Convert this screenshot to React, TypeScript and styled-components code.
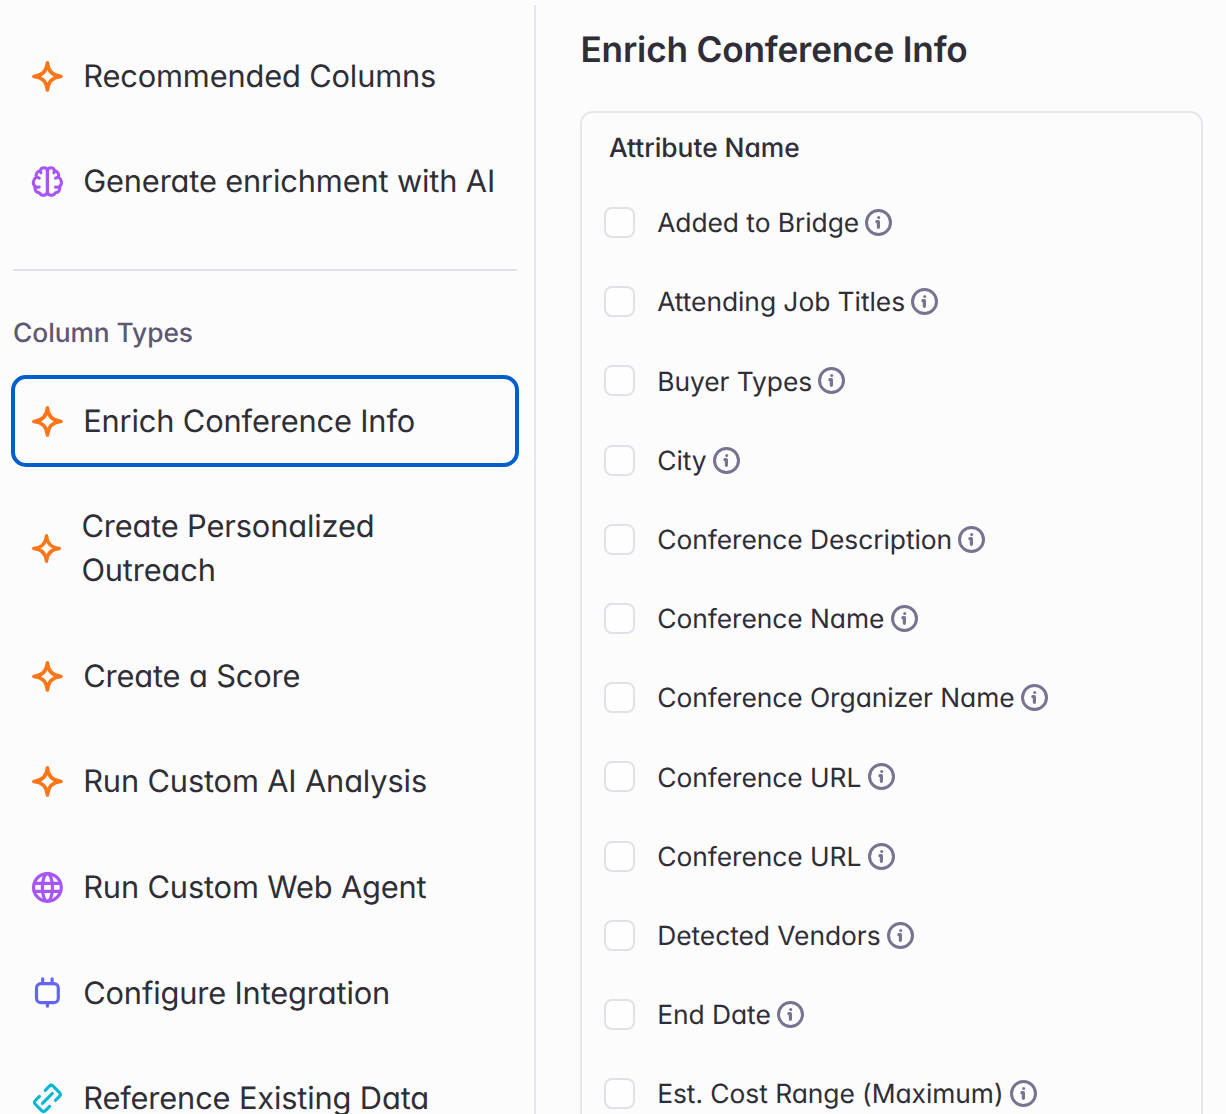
import React, { useState } from 'react';
import styled, { createGlobalStyle } from 'styled-components';

const GlobalStyle = createGlobalStyle`
  * {
    box-sizing: border-box;
  }

  body {
    margin: 0;
    background: #fcfcfc;
    color: #2f2e37;
    font-family: 'Inter', sans-serif;
    font-feature-settings: 'cv11' 1;
    text-rendering: geometricPrecision;
    overflow: hidden;
  }
`;

const Page = styled.div`
  display: flex;
  height: 1114px;
  overflow: hidden;
`;

const Sidebar = styled.aside`
  width: 536px;
  flex-shrink: 0;
  margin-top: 5px;
  padding: 27px 17px 0 13px;
  border-right: 2px solid #e6e5eb;
`;

const NavList = styled.nav`
  display: flex;
  flex-direction: column;
  gap: 17.6px;
`;

const NavItem = styled.button<{ $active?: boolean }>`
  display: flex;
  align-items: center;
  gap: 20.4px;
  width: 100%;
  padding: 22.8px 10px 21.2px 19px;
  border: none;
  border-radius: 13px;
  background: none;
  color: inherit;
  font-family: inherit;
  font-feature-settings: inherit;
  font-size: 30.8px;
  line-height: 44px;
  letter-spacing: -0.15px;
  text-align: left;
  text-rendering: inherit;
  cursor: pointer;
  outline: ${(props) => (props.$active ? '4px solid #005fcc' : 'none')};
  outline-offset: -2px;

  svg {
    margin-bottom: 1.6px;
  }
`;

const Divider = styled.hr`
  height: 2px;
  margin: 43.4px 0 41px;
  border: none;
  background: #e2e1e8;
`;

const SectionLabel = styled.h2`
  margin: 0 0 22px;
  font-size: 26.4px;
  font-weight: 500;
  line-height: 43px;
  letter-spacing: -0.08px;
  color: #5d5972;
`;

const IconSvg = styled.svg<{ $color: string; $size?: number }>`
  flex-shrink: 0;
  width: ${(props) => props.$size || 30.8}px;
  height: ${(props) => props.$size || 30.8}px;
  color: ${(props) => props.$color};
  overflow: visible;
`;

const Main = styled.main`
  flex: 1;
  padding: 28px 23px 0 44px;
`;

const Title = styled.h1`
  margin: 0 0 39px;
  padding-left: 0.5px;
  font-size: 35.2px;
  font-weight: 600;
  line-height: 44px;
  letter-spacing: -0.18px;
`;

const Table = styled.section`
  height: 1100px;
  border: 2px solid #e6e5eb;
  border-radius: 13px;
`;

const TableHeader = styled.div`
  padding: 13px 27px 0;
  font-size: 26.4px;
  font-weight: 500;
  line-height: 44px;
  letter-spacing: -0.04px;
`;

const Row = styled.label`
  display: flex;
  align-items: center;
  height: 79.2px;
  padding-left: 22px;
  font-size: 26.4px;
  letter-spacing: -0.06px;
`;

const Rows = styled.div`
  padding-top: 13px;
`;

const Checkbox = styled.input`
  appearance: none;
  width: 31px;
  height: 31px;
  margin: 0 22.2px 0 0;
  border: 2px solid #e2e1e8;
  border-radius: 8px;
  background: #fefeff;

  &:checked {
    background: #005fcc;
  }
`;

const RowLabel = styled.span`
  margin-right: 6.3px;
  padding-top: 1.2px;
`;

const SparkleIcon = ({ small }: { small?: boolean }) => (
  <IconSvg $color="#fb7618" $size={small ? 29 : 30.8} viewBox="0 0 28 28" fill="none">
    <path
      d="M14 1.6C14.6 9.4 18.6 13.4 26.4 14C18.6 14.6 14.6 18.6 14 26.4C13.4 18.6 9.4 14.6 1.6 14C9.4 13.4 13.4 9.4 14 1.6Z"
      stroke="currentColor"
      strokeWidth="3.2"
      strokeLinejoin="round"
    />
  </IconSvg>
);

const BrainIcon = () => (
  <IconSvg $color="#a855f7" viewBox="0 0 28 28" fill="none" stroke="currentColor" strokeWidth="2.8" strokeLinecap="round" strokeLinejoin="round">
    <path d="M14 4.2C13.3 .9 8.5 .5 7.5 4.3C4.7 4.7 3 7.4 4 10C.8 12 .3 16.3 2.8 18.5C2.1 22 4 24.3 6.7 24.3C8.2 27.6 13.3 27.5 14 23.7Z" />
    <path d="M14 4.2C14.7 .9 19.5 .5 20.5 4.3C23.3 4.7 25 7.4 24 10C27.2 12 27.7 16.3 25.2 18.5C25.9 22 24 24.3 21.3 24.3C19.8 27.6 14.7 27.5 14 23.7Z" />
    <path d="M7.5 4.5L8.1 6.2M20.5 4.5L19.9 6.2M4 10L6.6 11M24 10L21.4 11M3 18.9C4.6 19.5 5.8 19.4 6.6 19.1M25 18.9C23.4 19.5 22.2 19.4 21.4 19.1" />
  </IconSvg>
);

const GlobeIcon = () => (
  <IconSvg $color="#a855f7" viewBox="0 0 28 28" fill="none" stroke="currentColor" strokeWidth="2.9">
    <circle cx="14" cy="14" r="12.6" />
    <ellipse cx="14" cy="14" rx="4.6" ry="12.6" />
    <path d="M2 10.3H26M2 17.7H26" />
  </IconSvg>
);

const PlugIcon = () => (
  <IconSvg $color="#6366f1" viewBox="0 0 28 28" fill="none" stroke="currentColor" strokeWidth="2.9" strokeLinecap="round">
    <rect x="4.1" y="6" width="19.8" height="17.3" rx="4" />
    <path d="M9.7 1.7V6M18.3 1.7V6M14 23.5V26.6" />
  </IconSvg>
);

const LinkIcon = () => (
  <IconSvg $color="#06b6d4" viewBox="0 0 28 28" fill="none" stroke="currentColor" strokeWidth="2.8" strokeLinecap="round" strokeLinejoin="round">
    <path d="M12 6.7L15.8 2.9Q17.5 1.2 19.2 2.9L25 8.7Q26.7 10.4 25 12.1L21.3 15.8" />
    <path d="M16 21.3L12.2 25.1Q10.5 26.8 8.8 25.1L3 19.3Q1.3 17.6 3 15.9L6.7 12.2" />
    <path d="M9.5 18.5L18.5 9.5" />
  </IconSvg>
);

const InfoIcon = () => (
  <IconSvg $color="#777391" $size={27} viewBox="0 0 27 27" fill="none">
    <circle cx="13.5" cy="13.5" r="12" stroke="currentColor" strokeWidth="3" />
    <circle cx="13.7" cy="8.4" r="1.5" fill="currentColor" />
    <path d="M11.9 12.7H13.4V18.3" stroke="currentColor" strokeWidth="3.2" strokeLinecap="round" strokeLinejoin="round" />
  </IconSvg>
);

interface NavEntry {
  label: string;
  icon: React.ReactNode;
}

const topItems: NavEntry[] = [
  { label: 'Recommended Columns', icon: <SparkleIcon /> },
  { label: 'Generate enrichment with AI', icon: <BrainIcon /> },
];

const columnTypes: NavEntry[] = [
  { label: 'Enrich Conference Info', icon: <SparkleIcon /> },
  { label: 'Create Personalized Outreach', icon: <SparkleIcon small /> },
  { label: 'Create a Score', icon: <SparkleIcon /> },
  { label: 'Run Custom AI Analysis', icon: <SparkleIcon /> },
  { label: 'Run Custom Web Agent', icon: <GlobeIcon /> },
  { label: 'Configure Integration', icon: <PlugIcon /> },
  { label: 'Reference Existing Data', icon: <LinkIcon /> },
];

const attributes = [
  'Added to Bridge',
  'Attending Job Titles',
  'Buyer Types',
  'City',
  'Conference Description',
  'Conference Name',
  'Conference Organizer Name',
  'Conference URL',
  'Conference URL',
  'Detected Vendors',
  'End Date',
  'Est. Cost Range (Maximum)',
];

const App: React.FC = () => {
  const [selected, setSelected] = useState('Enrich Conference Info');

  const renderItem = (item: NavEntry) => (
    <NavItem
      key={item.label}
      $active={selected === item.label}
      onClick={() => setSelected(item.label)}
    >
      {item.icon}
      <span>{item.label}</span>
    </NavItem>
  );

  return (
    <>
      <GlobalStyle />
      <Page>
        <Sidebar>
          <NavList>{topItems.map(renderItem)}</NavList>
          <Divider />
          <SectionLabel>Column Types</SectionLabel>
          <NavList>{columnTypes.map(renderItem)}</NavList>
        </Sidebar>
        <Main>
          <Title>Enrich Conference Info</Title>
          <Table>
            <TableHeader>Attribute Name</TableHeader>
            <Rows>
              {attributes.map((name, index) => (
                <Row key={index}>
                  <Checkbox type="checkbox" />
                  <RowLabel>{name}</RowLabel>
                  <InfoIcon />
                </Row>
              ))}
            </Rows>
          </Table>
        </Main>
      </Page>
    </>
  );
};

export default App;
